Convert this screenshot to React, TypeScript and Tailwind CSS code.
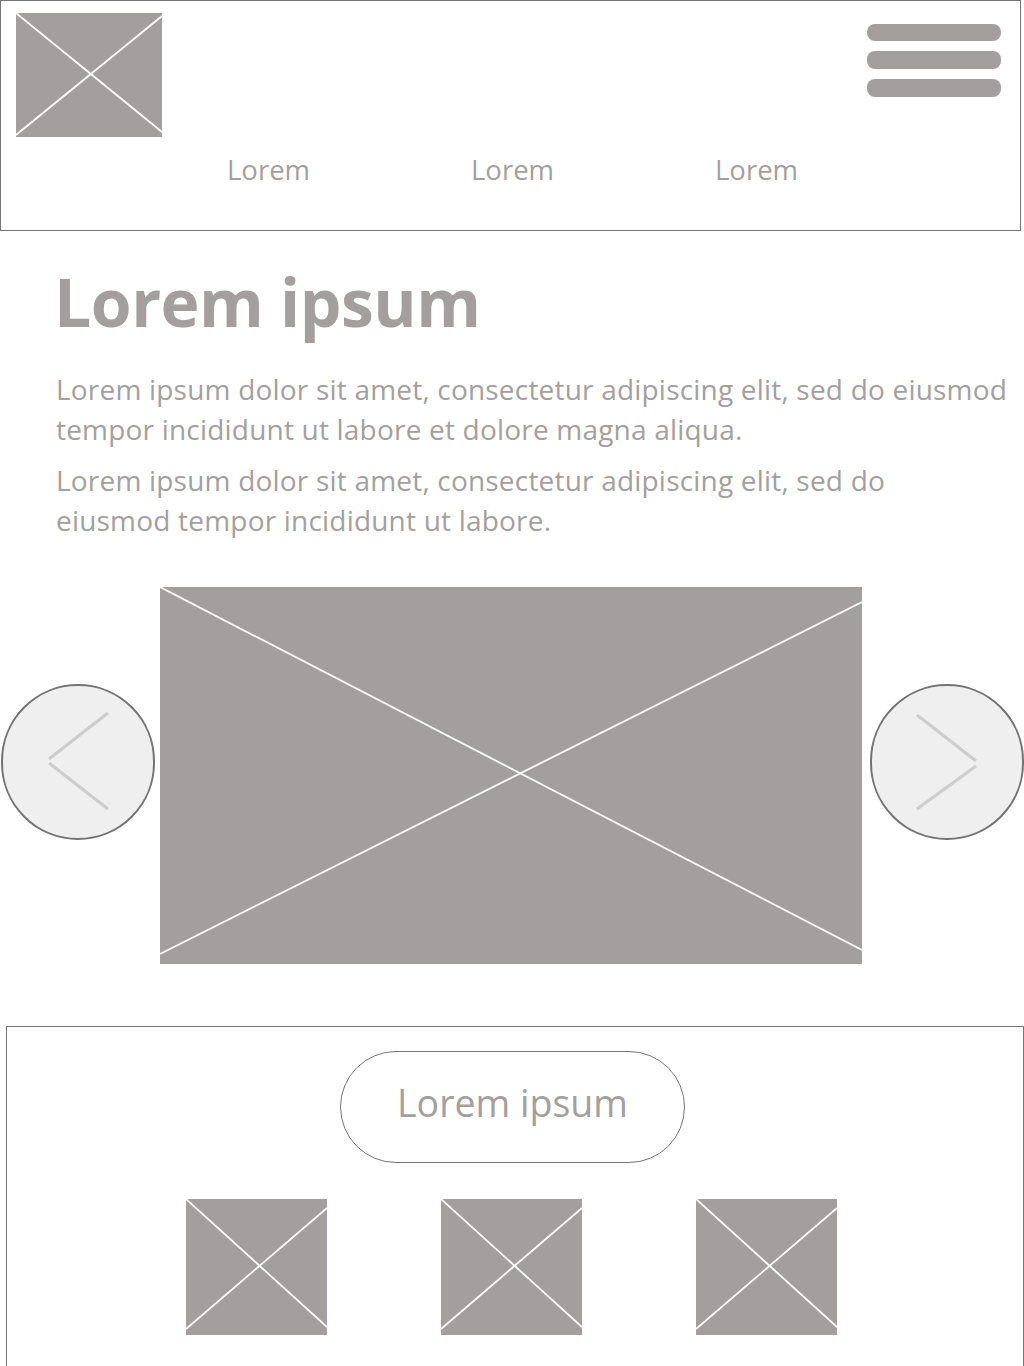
import React from "react";

function Placeholder({ w, h, lines, className = "" }: { w: number; h: number; lines: [number, number, number, number][]; className?: string }) {
  return (
    <div className={"shrink-0 bg-[#a39f9e] " + className} style={{ width: w, height: h }}>
      <svg width={w} height={h} viewBox={`0 0 ${w} ${h}`} className="block">
        {lines.map((l, i) => (
          <line key={i} x1={l[0]} y1={l[1]} x2={l[2]} y2={l[3]} stroke="#ffffff" strokeWidth={1.8} />
        ))}
      </svg>
    </div>
  );
}

function Arrow({ dir, className = "" }: { dir: "left" | "right"; className?: string }) {
  return (
    <div className={"w-[154px] h-[156px] shrink-0 rounded-full bg-[#efefef] border-[2px] border-[#737373] mt-[97px] " + className}>
      <svg width="150" height="152" viewBox="0 0 150 152" className="block">
        {dir === "left" ? (
          <>
            <line x1="105" y1="27" x2="46" y2="73" stroke="#cdcdcd" strokeWidth="3.2" />
            <line x1="46" y1="77" x2="105" y2="123" stroke="#cdcdcd" strokeWidth="3.2" />
          </>
        ) : (
          <>
            <line x1="45" y1="29" x2="104" y2="75" stroke="#cdcdcd" strokeWidth="3.2" />
            <line x1="104" y1="80" x2="45" y2="123" stroke="#cdcdcd" strokeWidth="3.2" />
          </>
        )}
      </svg>
    </div>
  );
}

export default function App() {
  const font = { fontFamily: '"Open Sans", "Noto Sans", sans-serif' };
  return (
    <div className="w-[1024px] h-[1366px] overflow-hidden bg-white text-[#a39f9e]" style={font}>
      {/* Header */}
      <header className="w-[1021px] h-[231px] border border-[#757575] flex flex-col">
        <div className="flex items-start justify-between pl-[15px] pt-[12px] pr-[19px]">
          <Placeholder w={146} h={124} lines={[[0, 0, 146, 119], [0, 122, 146, 3]]} />
          <div className="flex flex-col gap-[10px] mt-[11px]">
            <div className="w-[134px] h-[17px] rounded-[8px] bg-[#a39f9e]" />
            <div className="w-[134px] h-[18px] rounded-[8px] bg-[#a39f9e]" />
            <div className="w-[134px] h-[18px] rounded-[8px] bg-[#a39f9e]" />
          </div>
        </div>
        <nav className="flex pl-[226px] mt-[16px] text-[27.5px] leading-[34px]">
          <span className="w-[244px]">Lorem</span>
          <span className="w-[244px]">Lorem</span>
          <span className="w-[244px]">Lorem</span>
        </nav>
      </header>

      {/* Main text */}
      <main className="pl-[56px] pr-[10px]">
        <h1 className="mt-[37px] -ml-[2px] text-[66px] leading-[66px] font-bold tracking-[-0.5px]">Lorem ipsum</h1>
        <p className="mt-[35px] text-[28px] leading-[40px] tracking-[0.2px]">
          Lorem ipsum dolor sit amet, consectetur adipiscing elit, sed do eiusmod tempor incididunt ut labore et dolore magna aliqua.
        </p>
        <p className="mt-[11px] text-[28px] leading-[40px] tracking-[0.2px] w-[870px]">
          Lorem ipsum dolor sit amet, consectetur adipiscing elit, sed do eiusmod tempor incididunt ut labore.
        </p>
      </main>

      {/* Carousel */}
      <section className="mt-[47px] flex items-start pl-[1px]">
        <Arrow dir="left" />
        <Placeholder className="ml-[5px]" w={702} h={377} lines={[[0, 0, 702, 363], [0, 367, 702, 15]]} />
        <Arrow dir="right" className="ml-[8px]" />
      </section>

      {/* Footer */}
      <footer className="mt-[62px] ml-[6px] w-[1018px] h-[400px] border border-[#757575] flex flex-col">
        <div className="ml-[333px] mt-[24px] w-[345px] h-[112px] rounded-[56px] border border-[#757575] flex items-center justify-center text-[37.5px] pb-[8px]">
          Lorem ipsum
        </div>
        <div className="flex mt-[36px] ml-[179px] gap-[114px]">
          <Placeholder w={141} h={136} lines={[[0, 0, 141, 128], [0, 130, 141, 9]]} />
          <Placeholder w={141} h={136} lines={[[0, 0, 141, 128], [0, 130, 141, 9]]} />
          <Placeholder w={141} h={136} lines={[[0, 0, 141, 128], [0, 130, 141, 9]]} />
        </div>
      </footer>
    </div>
  );
}
